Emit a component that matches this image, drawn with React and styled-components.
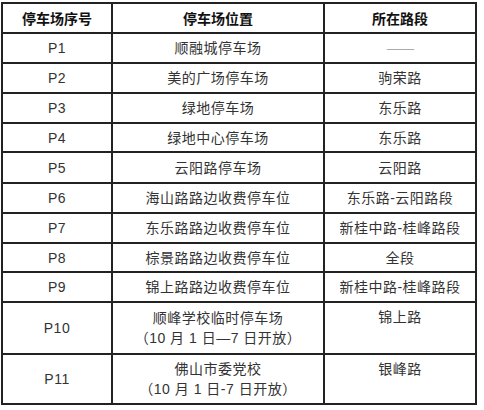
import React from 'react';
import styled, { createGlobalStyle } from 'styled-components';

const GlobalStyle = createGlobalStyle`
  html, body {
    margin: 0;
    padding: 0;
    background: #fff;
  }
  body {
    font-family: 'Liberation Sans', 'Noto Sans CJK SC', sans-serif;
  }
`;

const Page = styled.div`
  padding: 2px 0 0 1px;
  width: 484px;
  height: 410px;
  box-sizing: border-box;
`;

const Table = styled.table`
  border-collapse: collapse;
  table-layout: fixed;
  width: 476px;
  font-size: 14px;
  color: #333;
`;

const HeadCell = styled.th`
  border: 2px solid #222;
  height: ${(p) => p.h}px;
  padding: 0;
  font-weight: bold;
  color: #111;
  text-align: center;
  vertical-align: middle;
`;

const Cell = styled.td`
  border: 2px solid #222;
  height: ${(p) => p.h}px;
  padding: ${(p) => (p.top ? '4px 0 0' : '0')};
  color: #333;
  text-align: center;
  vertical-align: ${(p) => (p.top ? 'top' : 'middle')};
  letter-spacing: 0.5px;
  line-height: 20px;
`;

const Dash = styled.span`
  color: #aaa;
  letter-spacing: -1px;
`;

const rows = [
  { id: 'P1', place: '顺融城停车场', road: null, h: 28 },
  { id: 'P2', place: '美的广场停车场', road: '驹荣路', h: 28 },
  { id: 'P3', place: '绿地停车场', road: '东乐路', h: 28 },
  { id: 'P4', place: '绿地中心停车场', road: '东乐路', h: 27 },
  { id: 'P5', place: '云阳路停车场', road: '云阳路', h: 29 },
  { id: 'P6', place: '海山路路边收费停车位', road: '东乐路-云阳路段', h: 28 },
  { id: 'P7', place: '东乐路路边收费停车位', road: '新桂中路-桂峰路段', h: 28 },
  { id: 'P8', place: '棕景路路边收费停车位', road: '全段', h: 27 },
  { id: 'P9', place: '锦上路路边收费停车位', road: '新桂中路-桂峰路段', h: 28 },
  { id: 'P10', place: ['顺峰学校临时停车场', '（10 月 1 日—7 日开放）'], road: '锦上路', h: 46 },
  { id: 'P11', place: ['佛山市委党校', '（10 月 1 日-7 日开放）'], road: '银峰路', h: 44 },
];

export default function App() {
  return (
    <Page>
      <GlobalStyle />
      <Table>
        <colgroup>
          <col style={{ width: 110 }} />
          <col style={{ width: 212 }} />
          <col style={{ width: 152 }} />
        </colgroup>
        <thead>
          <tr>
            <HeadCell h={28}>停车场序号</HeadCell>
            <HeadCell h={28}>停车场位置</HeadCell>
            <HeadCell h={28}>所在路段</HeadCell>
          </tr>
        </thead>
        <tbody>
          {rows.map((r) => {
            const multi = Array.isArray(r.place);
            return (
              <tr key={r.id}>
                <Cell h={r.h}>{r.id}</Cell>
                <Cell h={r.h}>
                  {multi ? (
                    <>
                      {r.place[0]}
                      <br />
                      {r.place[1]}
                    </>
                  ) : r.place}
                </Cell>
                <Cell h={r.h} top={multi}>
                  {r.road === null ? <Dash>——</Dash> : r.road}
                </Cell>
              </tr>
            );
          })}
        </tbody>
      </Table>
    </Page>
  );
}
